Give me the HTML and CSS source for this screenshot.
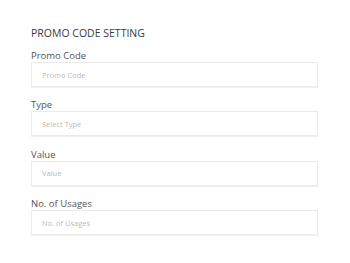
FILE: index.html
```html
<!DOCTYPE html>
<html lang="en">
<head>
  <meta charset="UTF-8" />
  <title>Promo Code Setting</title>
  <link rel="stylesheet" href="styles.css">
</head>
<body>
  <div class="panel">
    <h2>PROMO CODE SETTING</h2>

    <div class="field">
      <label>Promo Code</label>
      <input type="text" placeholder="Promo Code">
    </div>

    <div class="field">
      <label>Type</label>
      <input type="text" placeholder="Select Type">
    </div>

    <div class="field">
      <label>Value</label>
      <input type="text" placeholder="Value">
    </div>

    <div class="field">
      <label>No. of Usages</label>
      <input type="text" placeholder="No. of Usages">
    </div>
  </div>
</body>
</html>
```

FILE: styles.css
```css
body {
  margin: 0;
  padding: 0;
  background: #fff;
  font-family: 'Open Sans', sans-serif;
  color: #444;
}

.panel {
  padding: 26px 32px 0 31px;
}

h2 {
  font-size: 10.5px;
  font-weight: 400;
  color: #3a3a3a;
  margin: 0 0 9px 0;
  line-height: 14px;
}

.field {
  display: flex;
  flex-direction: column;
  margin-bottom: 11.4px;
}

label {
  font-size: 9.5px;
  line-height: 13px;
  color: #555;
}

input {
  height: 25px;
  box-sizing: border-box;
  border: 1px solid #ebebeb;
  box-shadow: 0 1px 1px #f0f0f0;
  padding: 0 10px;
  font-family: 'Open Sans', sans-serif;
  font-size: 7.5px;
  color: #444;
  outline: none;
}

input::placeholder {
  color: #bbb;
}
```
